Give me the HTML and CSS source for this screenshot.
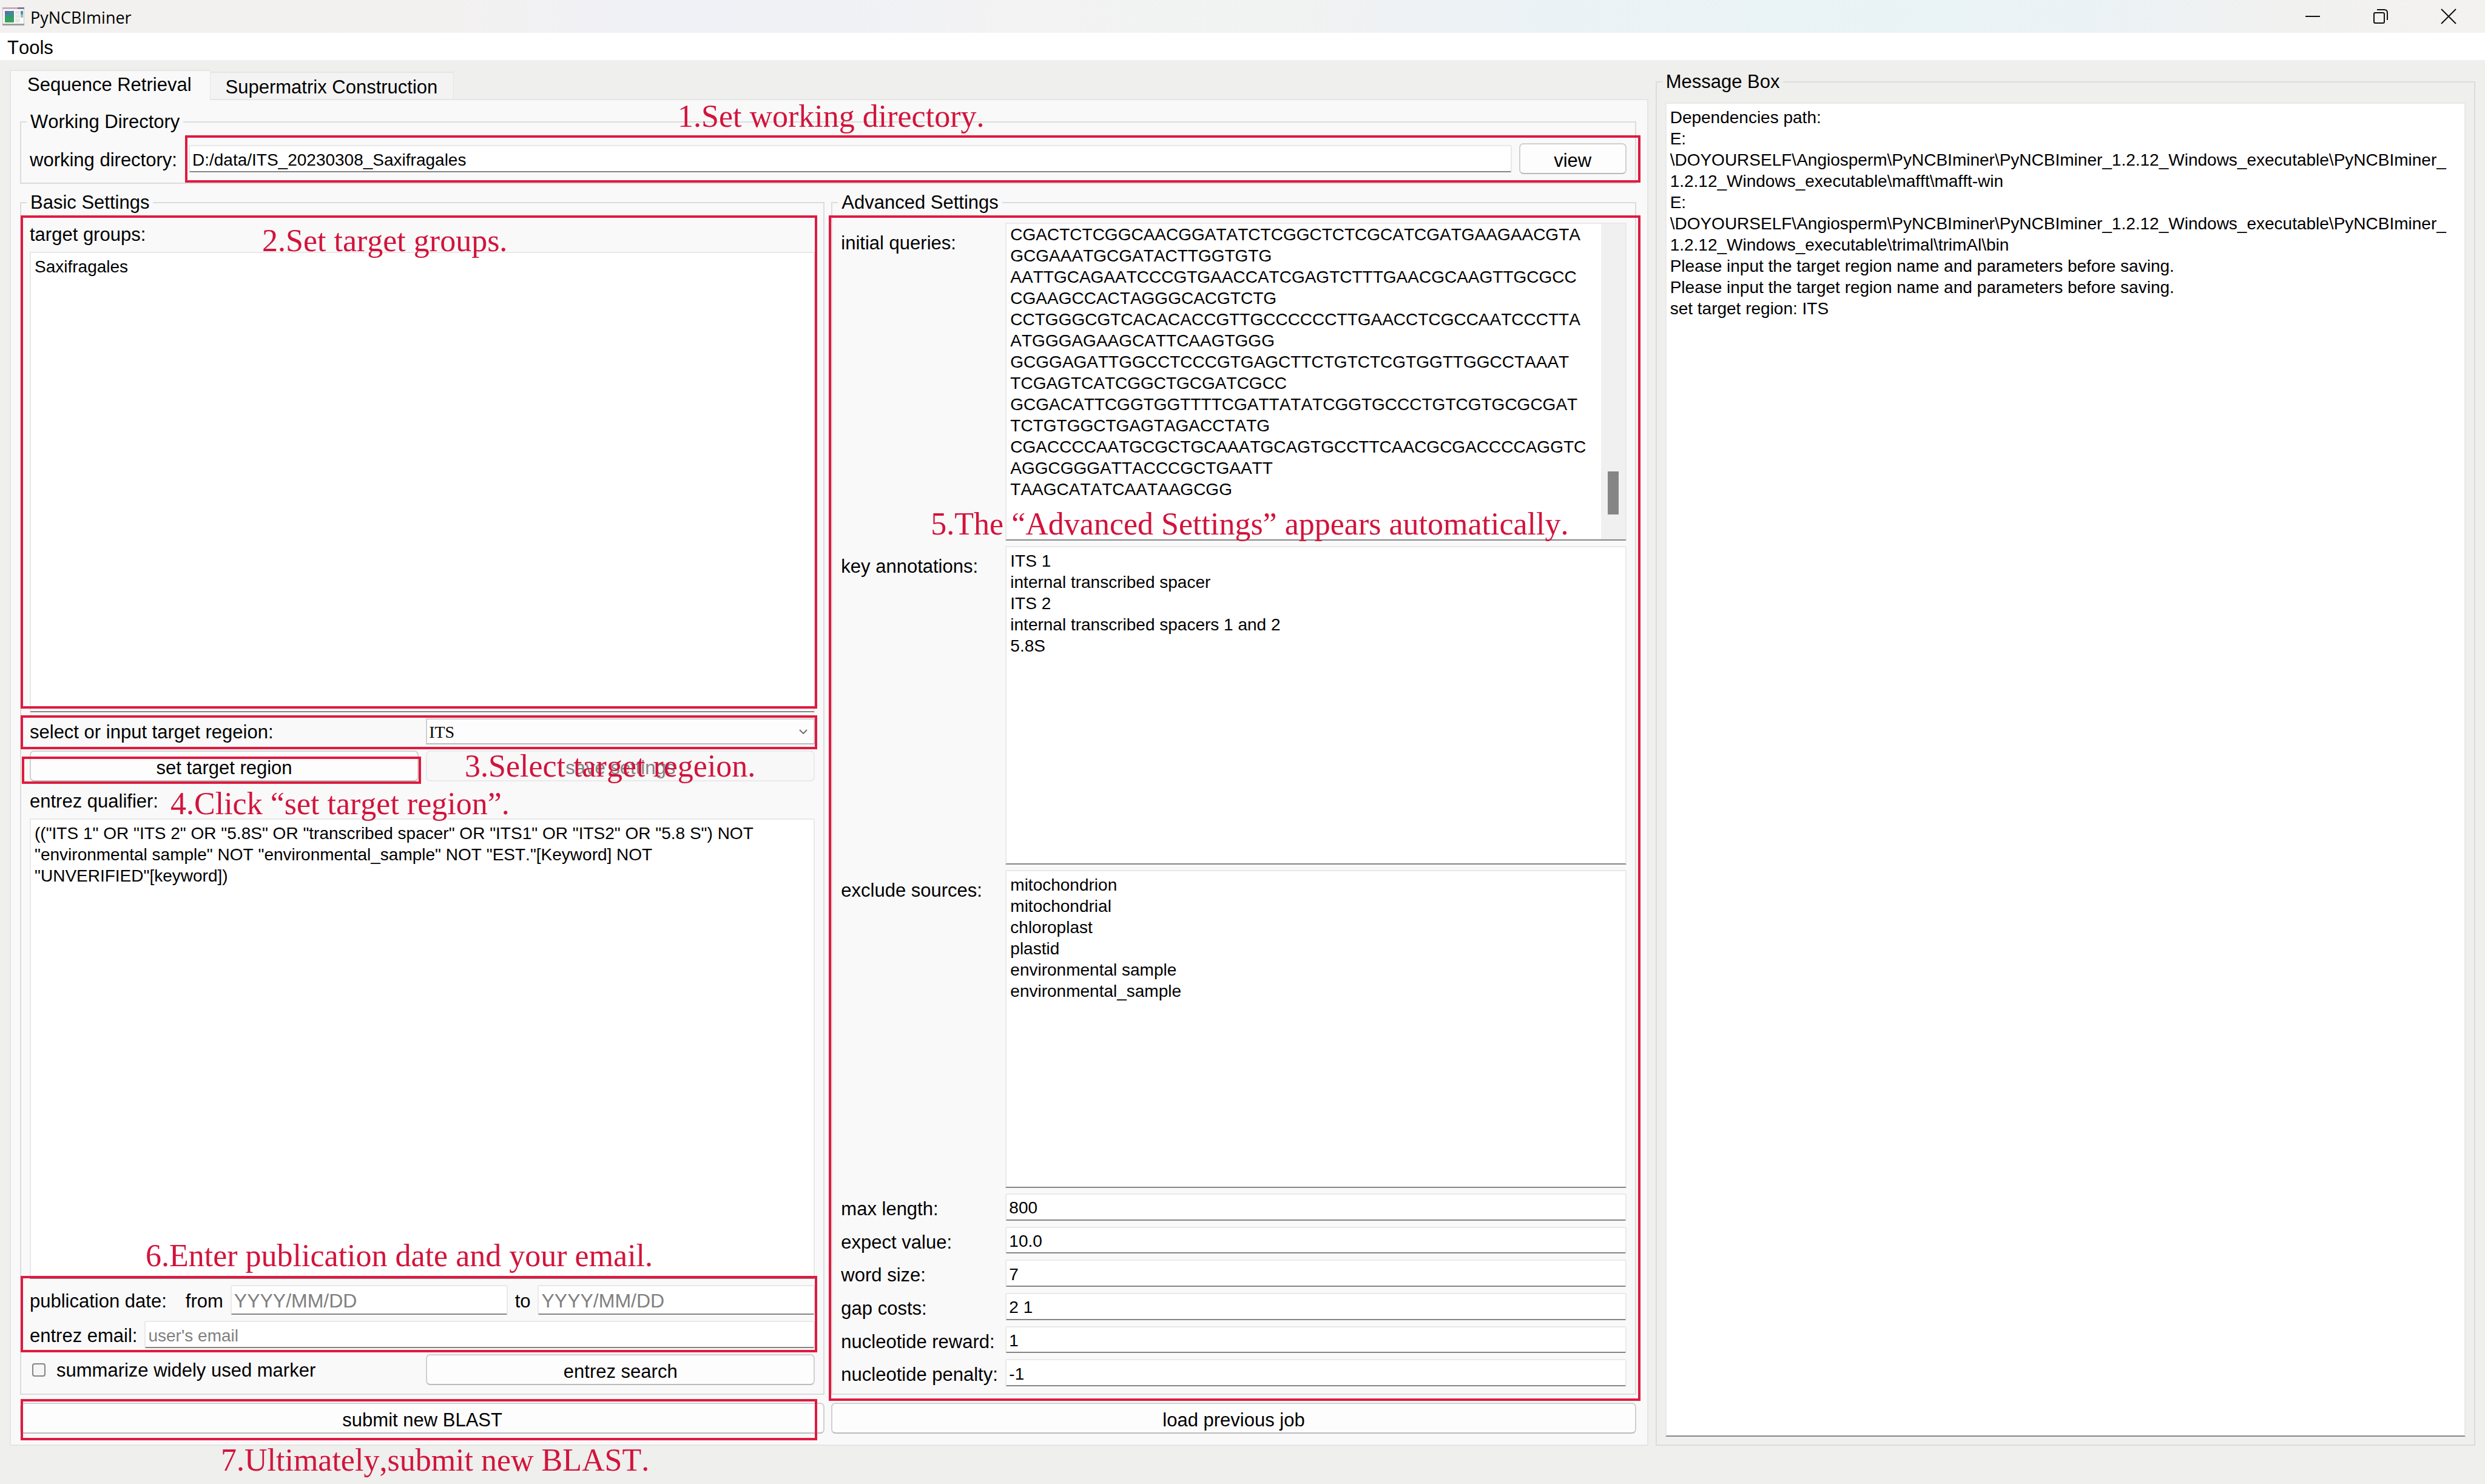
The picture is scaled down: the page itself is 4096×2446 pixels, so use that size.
FILE: index.html
```html
<!DOCTYPE html>
<html lang="en">
<head>
<meta charset="utf-8">
<title>PyNCBIminer</title>
<link rel="stylesheet" href="styles.css">
</head>
<body>
<header class="titlebar">
  <svg class="app-icon" viewBox="0 0 36 30" aria-hidden="true">
    <rect x="0" y="0" width="36" height="30" fill="#c4c4c6"/>
    <rect x="0" y="0" width="25" height="3" fill="#c9a9b8"/>
    <rect x="25" y="0" width="11" height="3" fill="#8a7699"/>
    <rect x="1" y="3" width="34" height="24" fill="#fbfbfb"/>
    <rect x="0" y="27" width="36" height="3" fill="#9b9fa0"/>
    <rect x="4" y="6" width="15" height="10" fill="#4686a0"/>
    <rect x="4" y="6" width="6" height="5" fill="#5a6fae"/>
    <rect x="4" y="15" width="15" height="10" fill="#35a35c"/>
    <rect x="11" y="11" width="8" height="7" fill="#3b9478"/>
    <rect x="21" y="6" width="8" height="19" fill="#e6e6e6"/>
    <rect x="30" y="6" width="4" height="6" fill="#5c8bb0"/>
    <rect x="30" y="12" width="4" height="5" fill="#8cc7a4"/>
    <path d="M21 12h8M21 18h8" stroke="#fff" stroke-width="1"/>
  </svg>
  <span class="app-title">PyNCBIminer</span>
  <div class="window-controls">
    <button type="button" aria-label="Minimize"><svg viewBox="0 0 24 24"><path d="M0 12h24"/></svg></button>
    <button type="button" aria-label="Restore"><svg viewBox="0 0 24 24"><rect x="1" y="6" width="17" height="17" rx="2"/><path d="M6 1h12q5 0 5 5v12"/></svg></button>
    <button type="button" aria-label="Close"><svg viewBox="0 0 24 24"><path d="M0 0l24 24M24 0L0 24"/></svg></button>
  </div>
</header>
<nav class="menubar"><button type="button">Tools</button></nav>

<main class="workspace">
  <div class="left">
    <div class="tabs" role="tablist">
      <button type="button" class="tab active" role="tab">Sequence Retrieval</button>
      <button type="button" class="tab" role="tab">Supermatrix Construction</button>
    </div>
    <div class="panel">
      <fieldset class="group">
        <legend>Working Directory</legend>
        <div class="row directory">
          <label for="wd">working directory:</label>
          <div class="row grow step">
            <input id="wd" class="field" type="text" value="D:/data/ITS_20230308_Saxifragales">
            <button type="button" class="btn view">view</button>
            <div class="mark mark-directory"></div>
            <p class="caption caption-directory">1.Set working directory.</p>
          </div>
        </div>
      </fieldset>

      <div class="columns settings">
        <fieldset class="group">
          <legend>Basic Settings</legend>
          <div class="basic">
            <div class="stack step">
              <label for="groups">target groups:</label>
              <textarea id="groups" class="area">Saxifragales</textarea>
              <div class="mark mark-groups"></div>
              <p class="caption caption-groups">2.Set target groups.</p>
            </div>
            <div class="halves step">
              <label for="region">select or input target regeion:</label>
              <div class="combo">
                <select id="region"><option>ITS</option></select>
                <svg viewBox="0 0 14 8" aria-hidden="true"><path d="M1 1l6 6 6-6"/></svg>
              </div>
              <div class="mark mark-region"></div>
              <p class="caption caption-region">3.Select target regeion.</p>
            </div>
            <div class="halves">
              <div class="step">
                <button type="button" class="btn">set target region</button>
                <div class="mark mark-set"></div>
                <p class="caption caption-set">4.Click “set target region”.</p>
              </div>
              <button type="button" class="btn" disabled>save settings</button>
            </div>
            <div class="stack qualifier">
              <label for="qualifier">entrez qualifier:</label>
              <textarea id="qualifier" class="area">(("ITS 1" OR "ITS 2" OR "5.8S" OR "transcribed spacer" OR "ITS1" OR "ITS2" OR "5.8 S") NOT
"environmental sample" NOT "environmental_sample" NOT "EST."[Keyword] NOT
"UNVERIFIED"[keyword])</textarea>
            </div>
            <div class="contact step">
              <div class="row dates">
                <span class="date-title">publication date:</span>
                <label for="from">from</label>
                <input id="from" class="field large" type="text" placeholder="YYYY/MM/DD">
                <label for="to">to</label>
                <input id="to" class="field large" type="text" placeholder="YYYY/MM/DD">
              </div>
              <div class="row email">
                <label for="email">entrez email:</label>
                <input id="email" class="field" type="text" placeholder="user's email">
              </div>
              <div class="mark mark-contact"></div>
              <p class="caption caption-contact">6.Enter publication date and your email.</p>
            </div>
            <div class="halves">
              <div class="check">
                <input id="summarize" type="checkbox">
                <label for="summarize">summarize widely used marker</label>
              </div>
              <button type="button" class="btn">entrez search</button>
            </div>
          </div>
        </fieldset>

        <fieldset class="group">
          <legend>Advanced Settings</legend>
          <div class="advanced step">
            <div class="form areas">
              <label for="queries">initial queries:</label>
              <div class="scroller">
                <textarea id="queries" class="area">CGACTCTCGGCAACGGATATCTCGGCTCTCGCATCGATGAAGAACGTA
GCGAAATGCGATACTTGGTGTG
AATTGCAGAATCCCGTGAACCATCGAGTCTTTGAACGCAAGTTGCGCC
CGAAGCCACTAGGGCACGTCTG
CCTGGGCGTCACACACCGTTGCCCCCCTTGAACCTCGCCAATCCCTTA
ATGGGAGAAGCATTCAAGTGGG
GCGGAGATTGGCCTCCCGTGAGCTTCTGTCTCGTGGTTGGCCTAAAT
TCGAGTCATCGGCTGCGATCGCC
GCGACATTCGGTGGTTTTCGATTATATCGGTGCCCTGTCGTGCGCGAT
TCTGTGGCTGAGTAGACCTATG
CGACCCCAATGCGCTGCAAATGCAGTGCCTTCAACGCGACCCCAGGTC
AGGCGGGATTACCCGCTGAATT
TAAGCATATCAATAAGCGG</textarea>
                <div class="track"><div class="thumb"></div></div>
              </div>
              <label for="annotations">key annotations:</label>
              <textarea id="annotations" class="area">ITS 1
internal transcribed spacer
ITS 2
internal transcribed spacers 1 and 2
5.8S</textarea>
              <label for="exclude">exclude sources:</label>
              <textarea id="exclude" class="area">mitochondrion
mitochondrial
chloroplast
plastid
environmental sample
environmental_sample</textarea>
            </div>
            <div class="form values">
              <label for="maxlen">max length:</label>
              <input id="maxlen" class="field" type="text" value="800">
              <label for="expect">expect value:</label>
              <input id="expect" class="field" type="text" value="10.0">
              <label for="word">word size:</label>
              <input id="word" class="field" type="text" value="7">
              <label for="gap">gap costs:</label>
              <input id="gap" class="field" type="text" value="2 1">
              <label for="reward">nucleotide reward:</label>
              <input id="reward" class="field" type="text" value="1">
              <label for="penalty">nucleotide penalty:</label>
              <input id="penalty" class="field" type="text" value="-1">
            </div>
            <div class="mark mark-advanced"></div>
            <p class="caption caption-advanced">5.The “Advanced Settings” appears automatically.</p>
          </div>
        </fieldset>
      </div>

      <div class="columns">
        <div class="step">
          <button type="button" class="btn">submit new BLAST</button>
          <div class="mark mark-submit"></div>
          <p class="caption caption-submit">7.Ultimately,submit new BLAST.</p>
        </div>
        <button type="button" class="btn">load previous job</button>
      </div>
    </div>
  </div>

  <fieldset class="group messages">
    <legend>Message Box</legend>
    <textarea class="area" aria-label="Messages" readonly>Dependencies path:
E:
\DOYOURSELF\Angiosperm\PyNCBIminer\PyNCBIminer_1.2.12_Windows_executable\PyNCBIminer_
1.2.12_Windows_executable\mafft\mafft-win
E:
\DOYOURSELF\Angiosperm\PyNCBIminer\PyNCBIminer_1.2.12_Windows_executable\PyNCBIminer_
1.2.12_Windows_executable\trimal\trimAl\bin
Please input the target region name and parameters before saving.
Please input the target region name and parameters before saving.
set target region: ITS</textarea>
  </fieldset>
</main>
</body>
</html>
```
FILE: styles.css
```css
* {
  box-sizing: border-box;
}

body {
  margin: 0;
  min-height: 100vh;
  display: flex;
  flex-direction: column;
  background: #efefed;
  color: #000;
  font-family: "Liberation Sans", Arial, sans-serif;
  font-size: 31px;
  line-height: 36px;
  font-kerning: none;
}

button,
input,
select,
textarea {
  margin: 0;
  font: inherit;
  color: inherit;
  font-kerning: none;
}

/* Window frame */
.titlebar {
  display: flex;
  align-items: center;
  gap: 10px;
  height: 54px;
  padding: 0 4px;
  background: linear-gradient(90deg, #f2f1ef 0%, #f3f1f0 18%, #f0f1f6 26%, #f0f1f5 34%, #f3f3f3 41%, #f1f2f2 52%, #ebf2f5 62%, #e9f3f6 76%, #ebf2f5 84%, #f1f1f0 92%, #f3f2f1 100%);
}

.app-icon {
  width: 36px;
  height: 30px;
}

.app-title {
  font-family: "Open Sans", "Noto Sans", sans-serif;
  font-size: 27px;
  padding-top: 3px;
}

.window-controls {
  display: flex;
  margin-left: auto;
}

.window-controls button {
  width: 112px;
  height: 54px;
  padding: 0;
  border: 0;
  background: none;
}

.window-controls svg {
  display: block;
  width: 24px;
  height: 24px;
  margin: 0 auto;
  overflow: visible;
  fill: none;
  stroke: #111;
  stroke-width: 2;
}

.menubar {
  display: flex;
  height: 45px;
  padding: 0 12px;
  background: #fff;
}

.menubar button {
  padding: 4px 0 0;
  border: 0;
  background: none;
}

.workspace {
  flex: 1;
  display: grid;
  grid-template-columns: 2700fr 1351fr;
  gap: 12px;
  padding: 0 16px 63px;
}

.left {
  display: flex;
  flex-direction: column;
  min-width: 0;
}

/* Tabs */
.tabs {
  display: flex;
  align-items: flex-end;
  height: 64px;
}

.tab {
  height: 45px;
  padding: 4px 26px 0 25px;
  border: solid #e5e5e5;
  border-width: 2px 1px 0 0;
  background: #f3f3f3;
}

.tab.active {
  position: relative;
  height: 50px;
  margin-bottom: -2px;
  padding: 0 30px 2px 27px;
  border-width: 2px 1px 0 2px;
  background: #f9f9f9;
}

.panel {
  flex: 1;
  display: flex;
  flex-direction: column;
  gap: 13px;
  padding: 18px 18px 18px 15px;
  border: 2px solid #e5e5e5;
  background: #f9f9f9;
}

.columns {
  display: grid;
  grid-template-columns: 1fr 1fr;
  gap: 11px;
}

.settings {
  flex: 1;
}

.group {
  display: flex;
  flex-direction: column;
  min-width: 0;
  margin: 0;
  padding: 0 14px;
  border: 2px solid #dcdcdc;
}

.group legend {
  margin-left: -5px;
  padding: 0 6px;
}

/* Controls */
.row {
  display: flex;
  align-items: center;
  gap: 12px;
}

.grow {
  flex: 1;
}

.row label,
.date-title {
  padding-top: 4px;
  white-space: nowrap;
}

.field {
  flex: 1;
  min-width: 0;
  height: 45px;
  padding: 4px 4px 0;
  border: 2px solid #e9e9e9;
  border-bottom-color: #858585;
  border-radius: 3px;
  background: #fff;
  font-size: 28px;
  outline: none;
}

.field.large {
  height: 49px;
  font-size: 32px;
}

.field::placeholder {
  color: #808080;
  opacity: 1;
}

.area {
  display: block;
  width: 100%;
  min-height: 0;
  padding: 5px 6px;
  border: 2px solid #e9e9e9;
  border-bottom-color: #858585;
  background: #fff;
  font-size: 28px;
  line-height: 35px;
  white-space: pre;
  overflow: hidden;
  resize: none;
  outline: none;
}

.btn {
  width: 100%;
  height: 51px;
  padding: 6px 12px 0;
  border: 2px solid #d0d0d0;
  border-bottom-color: #bababa;
  border-radius: 7px;
  background: #fdfdfd;
}

.btn:disabled {
  border-color: #e9e9e9;
  background: #f8f8f8;
  color: #838383;
}

.btn.view {
  width: 177px;
}

.directory {
  height: 79px;
  margin-top: 3px;
}

.directory > label {
  min-width: 250px;
}

/* Basic settings */
.basic {
  flex: 1;
  display: flex;
  flex-direction: column;
  gap: 10px;
  padding: 17px 0 14px;
}

.stack {
  flex: 1;
  display: flex;
  flex-direction: column;
  gap: 10px;
}

.stack .area {
  flex: 1;
}

.stack.qualifier {
  padding-top: 5px;
}

.halves {
  display: grid;
  grid-template-columns: 1fr 1fr;
  gap: 12px;
  align-items: center;
}

.halves label {
  padding-top: 3px;
}

.combo {
  position: relative;
}

.combo select {
  display: block;
  width: 100%;
  height: 43px;
  padding: 2px 3px 0;
  border: 2px solid #d0d0d0;
  border-bottom-color: #bababa;
  border-radius: 0;
  background: #fdfdfd;
  appearance: none;
  font-family: "Liberation Serif", "Times New Roman", serif;
  font-size: 28px;
}

.combo svg {
  position: absolute;
  right: 12px;
  top: 18px;
  width: 14px;
  height: 8px;
  fill: none;
  stroke: #707070;
  stroke-width: 2;
}

.contact {
  display: flex;
  flex-direction: column;
  gap: 10px;
}

.date-title {
  margin-right: 19px;
}

.check {
  display: flex;
  align-items: center;
  gap: 18px;
  padding-left: 4px;
}

.check input {
  appearance: none;
  width: 22px;
  height: 22px;
  border: 2px solid #858585;
  border-radius: 4px;
  background: #f6f6f6;
}

/* Advanced settings */
.advanced {
  flex: 1;
  display: flex;
  flex-direction: column;
  gap: 9px;
  padding: 15px 0 12px;
}

.form {
  display: grid;
  grid-template-columns: 271px 1fr;
}

.areas {
  flex: 1;
  grid-auto-rows: 1fr;
  row-gap: 9px;
}

.areas label {
  padding-top: 16px;
}

.values {
  height: 318px;
  grid-auto-rows: 1fr;
  row-gap: 10px;
}

.values label {
  padding-top: 8px;
}

.values .field {
  height: auto;
}

.scroller {
  display: grid;
  grid-template-columns: 1fr 40px;
  border: 2px solid #e9e9e9;
  border-bottom-color: #858585;
}

.scroller .area {
  border: 0;
  padding-top: 0;
}

.track {
  display: flex;
  flex-direction: column;
  align-items: center;
  justify-content: flex-end;
  padding-bottom: 41px;
  background: #f0f0f0;
}

.thumb {
  width: 18px;
  height: 71px;
  background: #858585;
}

/* Message box */
.messages {
  margin-top: 18px;
}

.messages .area {
  flex: 1;
  margin: 16px 0 13px;
}

/* Walkthrough overlays */
.step {
  position: relative;
}

.mark {
  position: absolute;
  z-index: 2;
  border: 4px solid #e01a40;
  pointer-events: none;
}

.caption {
  position: absolute;
  z-index: 3;
  margin: 0;
  color: #d2143c;
  font-family: "Liberation Serif", "Times New Roman", serif;
  font-size: 52px;
  line-height: 60px;
  white-space: nowrap;
  pointer-events: none;
}

.mark-directory { inset: -13px -23px -14px -6px; }
.mark-groups { inset: -14px -4px 6px -15px; }
.mark-region { inset: -5px -4px -8px -15px; }
.mark-set { inset: 10px -4px -4px -13px; }
.mark-contact { inset: -15px -4px -7px -15px; }
.mark-advanced { inset: 3px -23px -12px -20px; }
.mark-submit { inset: -6px 12px -11px 1px; }

.caption-directory { left: 806px; top: -74px; }
.caption-groups { left: 383px; top: -2px; }
.caption-region { left: 717px; top: 49px; }
.caption-set { left: 232px; top: 58px; }
.caption-contact { left: 191px; top: -78px; }
.caption-advanced { left: 148px; top: 482px; }
.caption-submit { left: 331px; top: 65px; }
```
